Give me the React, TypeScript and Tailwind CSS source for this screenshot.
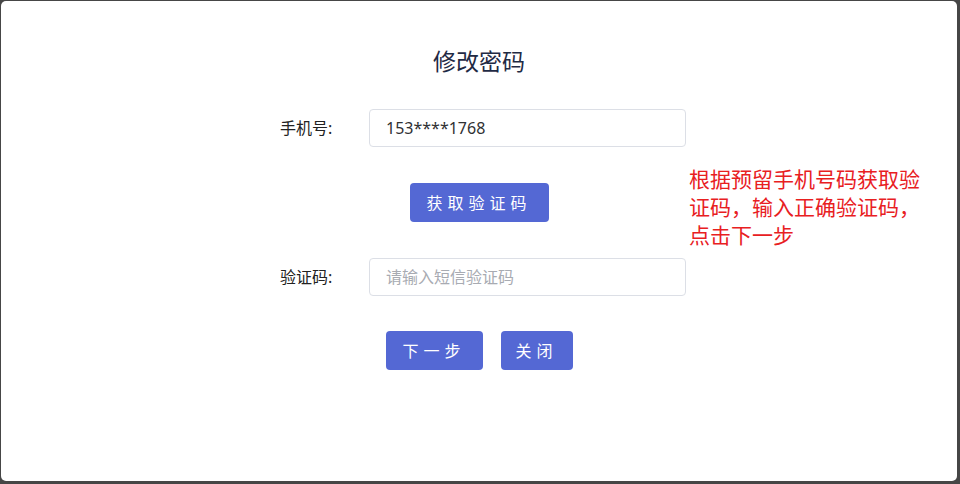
import React from "react";

const font = { fontFamily: '"Noto Sans", "Noto Sans CJK SC", sans-serif' };

function Field({ label, value, placeholder }: { label: string; value?: string; placeholder?: string }) {
  return (
    <div className="flex items-center w-[406px] ml-[8px]">
      <span className="w-[89px] text-[16px] text-[#222]">{label}</span>
      <input
        readOnly
        value={value}
        placeholder={placeholder}
        className="w-[317px] h-[38px] rounded-[4px] border border-[#dcdfe6] bg-white px-[16px] text-[16px] text-[#303133] placeholder:text-[#a8abb2] outline-none"
        style={font}
      />
    </div>
  );
}

export default function App() {
  return (
    <div className="w-[960px] h-[484px] bg-[#464646] pt-px pl-px" style={font}>
      <div className="relative w-[956px] h-[480px] rounded-[5px] bg-white flex flex-col items-center pt-[44px]">
        <h1 className="text-[23px] leading-[32px] text-[#1f2a44]">修改密码</h1>

        <div className="mt-[32px]">
          <Field label="手机号:" value="153****1768" />
        </div>

        <button className="mt-[36px] w-[139px] h-[39px] rounded-[4px] bg-[#5468d4] text-white text-[16px] tracking-[5px]">
          获取验证码
        </button>

        <div className="mt-[36px]">
          <Field label="验证码:" placeholder="请输入短信验证码" />
        </div>

        <div className="mt-[35px] flex gap-[18px]">
          <button className="w-[97px] h-[39px] rounded-[4px] bg-[#5468d4] text-white text-[16px] tracking-[5px]">
            下一步
          </button>
          <button className="w-[72px] h-[39px] rounded-[4px] bg-[#5468d4] text-white text-[16px] tracking-[5px]">
            关闭
          </button>
        </div>

        <p className="absolute left-[688px] top-[164px] w-[240px] text-[21px] leading-[28px] text-[#e8201f]">
          根据预留手机号码获取验证码，输入正确验证码，点击下一步
        </p>
      </div>
    </div>
  );
}
